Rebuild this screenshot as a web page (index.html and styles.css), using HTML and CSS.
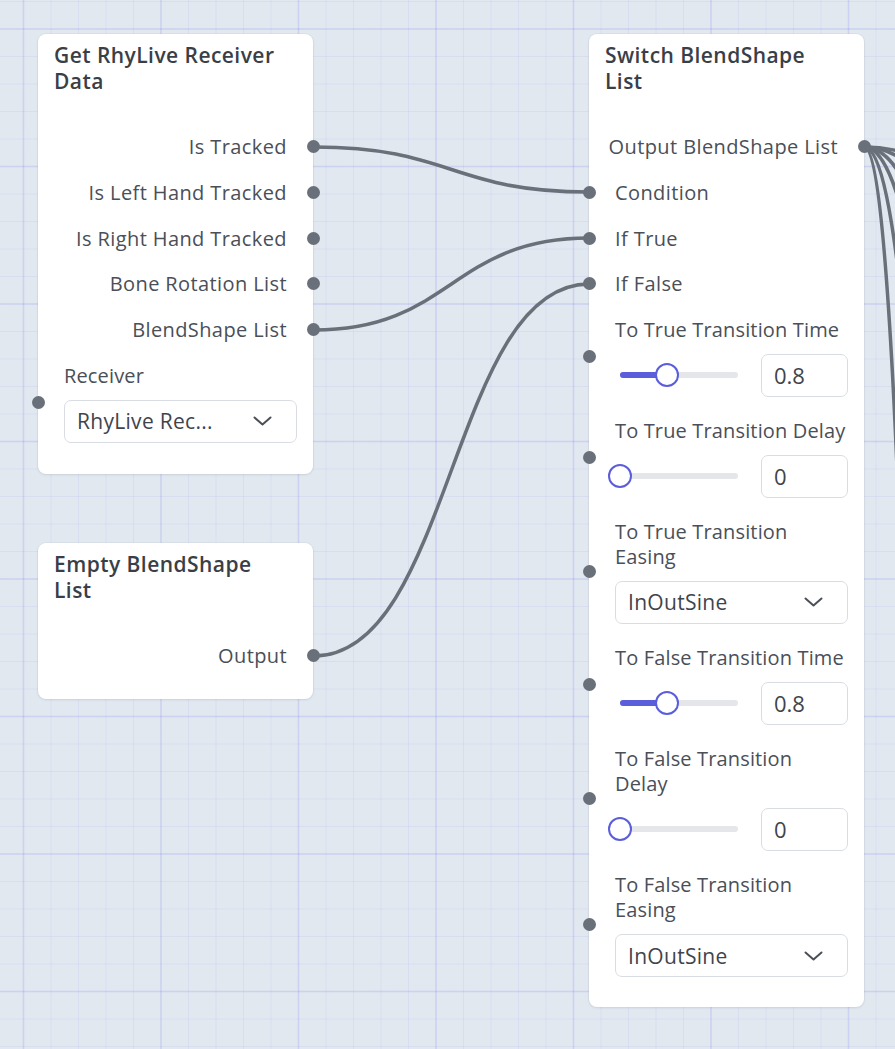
FILE: index.html
```html
<!DOCTYPE html>
<html lang="en">
<head>
<meta charset="utf-8">
<title>Node Graph</title>
<link rel="stylesheet" href="styles.css">
</head>
<body>
<div class="canvas">
  <svg class="wires" width="895" height="1049" viewBox="0 0 895 1049">
    <path d="M314 147 C451.5 147, 451.5 192, 589 192"/>
    <path d="M314 330 C451.5 330, 451.5 238, 589 238"/>
    <path d="M314 656 C451.5 656, 451.5 284, 589 284"/>
    <path d="M864 147 C1082 147, 1082 600, 1300 600"/>
    <path d="M864 147 C1032 147, 1032 800, 1200 800"/>
    <path d="M864 147 C982 147, 982 900, 1100 900"/>
    <path d="M864 147 C957 147, 957 1100, 1050 1100"/>
    <path d="M864 147 C932 147, 932 1300, 1000 1300"/>
    <path d="M864 147 C912 147, 912 1600, 960 1600"/>
  </svg>

  <div class="node node-receiver">
    <div class="node-title">Get RhyLive Receiver Data</div>
    <div class="node-body">
      <div class="port out">Is Tracked<span class="dot"></span></div>
      <div class="port out">Is Left Hand Tracked<span class="dot"></span></div>
      <div class="port out">Is Right Hand Tracked<span class="dot"></span></div>
      <div class="port out">Bone Rotation List<span class="dot"></span></div>
      <div class="port out">BlendShape List<span class="dot"></span></div>
      <div class="field in">
        <span class="dot"></span>
        <div class="field-label">Receiver</div>
        <div class="select"><span>RhyLive Rec...</span><svg class="chev" width="19" height="10" viewBox="0 0 19 10"><path d="M1.5 1.5 L9.5 8.5 L17.5 1.5"/></svg></div>
      </div>
    </div>
  </div>

  <div class="node node-empty">
    <div class="node-title">Empty BlendShape List</div>
    <div class="node-body">
      <div class="port out">Output<span class="dot"></span></div>
    </div>
  </div>

  <div class="node node-switch">
    <div class="node-title">Switch BlendShape List</div>
    <div class="node-body">
      <div class="port out">Output BlendShape List<span class="dot"></span></div>
      <div class="port in"><span class="dot"></span>Condition</div>
      <div class="port in"><span class="dot"></span>If True</div>
      <div class="port in"><span class="dot"></span>If False</div>

      <div class="field in">
        <span class="dot"></span>
        <div class="field-label">To True Transition Time</div>
        <div class="slider-row">
          <div class="slider" style="--v:0.4">
            <div class="track"><div class="fill"></div></div>
            <div class="thumb"></div>
          </div>
          <div class="num">0.8</div>
        </div>
      </div>

      <div class="field in">
        <span class="dot"></span>
        <div class="field-label">To True Transition Delay</div>
        <div class="slider-row">
          <div class="slider" style="--v:0">
            <div class="track"><div class="fill"></div></div>
            <div class="thumb"></div>
          </div>
          <div class="num">0</div>
        </div>
      </div>

      <div class="field in">
        <span class="dot"></span>
        <div class="field-label">To True Transition Easing</div>
        <div class="select"><span>InOutSine</span><svg class="chev" width="19" height="10" viewBox="0 0 19 10"><path d="M1.5 1.5 L9.5 8.5 L17.5 1.5"/></svg></div>
      </div>

      <div class="field in">
        <span class="dot"></span>
        <div class="field-label">To False Transition Time</div>
        <div class="slider-row">
          <div class="slider" style="--v:0.4">
            <div class="track"><div class="fill"></div></div>
            <div class="thumb"></div>
          </div>
          <div class="num">0.8</div>
        </div>
      </div>

      <div class="field in">
        <span class="dot"></span>
        <div class="field-label">To False Transition Delay</div>
        <div class="slider-row">
          <div class="slider" style="--v:0">
            <div class="track"><div class="fill"></div></div>
            <div class="thumb"></div>
          </div>
          <div class="num">0</div>
        </div>
      </div>

      <div class="field in">
        <span class="dot"></span>
        <div class="field-label">To False Transition Easing</div>
        <div class="select"><span>InOutSine</span><svg class="chev" width="19" height="10" viewBox="0 0 19 10"><path d="M1.5 1.5 L9.5 8.5 L17.5 1.5"/></svg></div>
      </div>
    </div>
  </div>
</div>
</body>
</html>
```
FILE: styles.css
```css
html, body {
  margin: 0;
  padding: 0;
}

body {
  font-family: "Open Sans", "Noto Sans", sans-serif;
  background: #e2e8f0;
}

.canvas {
  position: relative;
  width: 895px;
  height: 1049px;
  overflow: hidden;
  background-color: #e2e8f0;
  background-image:
    linear-gradient(to right, rgba(99, 102, 241, 0.10) 0, rgba(99, 102, 241, 0.10) 2px, transparent 2px),
    linear-gradient(to bottom, rgba(99, 102, 241, 0.10) 0, rgba(99, 102, 241, 0.10) 2px, transparent 2px),
    linear-gradient(to right, rgba(99, 102, 241, 0.08) 0, rgba(99, 102, 241, 0.08) 1px, transparent 1px),
    linear-gradient(to bottom, rgba(99, 102, 241, 0.08) 0, rgba(99, 102, 241, 0.08) 1px, transparent 1px);
  background-size: 137.5px 137.5px, 137.5px 137.5px, 27.5px 27.5px, 27.5px 27.5px;
  background-position: 22.5px 0, 0 28px, 23px 0, 0 1px;
}

.wires {
  position: absolute;
  left: 0;
  top: 0;
}

.wires path {
  fill: none;
  stroke: #6a7079;
  stroke-width: 3.5;
  stroke-linecap: round;
}

.node {
  position: absolute;
  width: 275px;
  box-sizing: border-box;
  padding: 8px 0 31px;
  background: #ffffff;
  border-radius: 8px;
  box-shadow: 0 1px 3px rgba(15, 23, 42, 0.08), 0 0 0 1px rgba(15, 23, 42, 0.03);
}

.node-receiver { left: 38px; top: 34px; }
.node-empty { left: 38px; top: 543px; }
.node-switch { left: 589px; top: 34px; padding-bottom: 30px; }

.node-title {
  padding: 0 24px 0 16px;
  font-size: 21px;
  font-weight: 600;
  letter-spacing: 0.45px;
  line-height: 26px;
  color: #3a3f47;
}

.node-body {
  margin-top: 40px;
  display: flex;
  flex-direction: column;
  gap: 20.5px;
}

.port {
  position: relative;
  font-size: 20px;
  letter-spacing: 0.4px;
  line-height: 25.25px;
  color: #4a4f58;
  white-space: nowrap;
}

.port.out {
  text-align: right;
  padding-right: 26px;
}

.port.in {
  padding-left: 26px;
}

.dot {
  position: absolute;
  top: 50%;
  width: 13px;
  height: 13px;
  margin-top: -6.5px;
  border-radius: 50%;
  background: #6a7079;
}

.out .dot { right: -6.5px; }
.in .dot { left: -6.5px; }

.field {
  position: relative;
  padding: 0 16px 0 26px;
}

.field + .field {
  margin-top: 0.5px;
}

.field-label {
  font-size: 20px;
  letter-spacing: 0.15px;
  line-height: 25.5px;
  color: #4a4f58;
  margin-bottom: 11.25px;
}

.select {
  display: flex;
  align-items: center;
  justify-content: space-between;
  box-sizing: border-box;
  height: 43px;
  padding: 0 24px 0 12px;
  border: 1px solid #d9dde3;
  border-radius: 7px;
  background: #fff;
  font-size: 21px;
  letter-spacing: 0.3px;
  color: #3f444c;
}

.chev {
  flex: none;
}

.chev path {
  fill: none;
  stroke: #4b5058;
  stroke-width: 2;
  stroke-linecap: round;
  stroke-linejoin: round;
}

.slider-row {
  display: flex;
  align-items: center;
  gap: 16px;
}

.slider {
  position: relative;
  width: 130px;
  height: 24px;
  flex: none;
}

.track {
  position: absolute;
  left: 5px;
  right: 7px;
  top: 9px;
  height: 6px;
  border-radius: 3px;
  background: #e4e6ea;
  overflow: hidden;
}

.fill {
  height: 100%;
  width: calc(var(--v) * 100%);
  background: #5b5edb;
}

.thumb {
  position: absolute;
  top: 0;
  left: calc(5px + var(--v) * 118px - 12px);
  width: 24px;
  height: 24px;
  box-sizing: border-box;
  border: 2.5px solid #5b5edb;
  border-radius: 50%;
  background: #fff;
}

.num {
  box-sizing: border-box;
  width: 87px;
  height: 43px;
  padding-left: 12px;
  border: 1px solid #d9dde3;
  border-radius: 7px;
  font-size: 22px;
  line-height: 41px;
  color: #3f444c;
}
```
